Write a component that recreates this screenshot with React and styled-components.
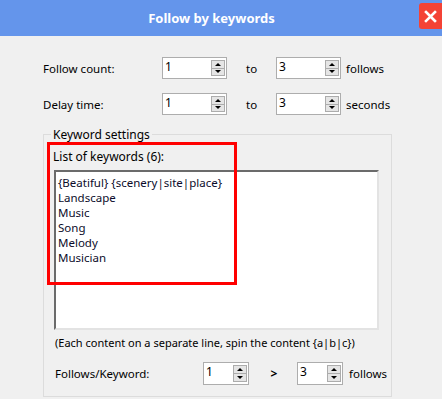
import React from 'react'
import styled, { createGlobalStyle } from 'styled-components'

const GlobalStyle = createGlobalStyle`
  html, body {
    margin: 0;
    padding: 0;
    background: #f0f0f0;
  }
  * {
    box-sizing: border-box;
  }
`;

const Window = styled.div`
  width: 442px;
  height: 399px;
  background: #f0f0f0;
  font-family: "Noto Sans", "Liberation Sans", sans-serif;
  font-size: 11.5px;
  color: #000;
  display: flex;
  flex-direction: column;
  overflow: hidden;
`;

const TitleBar = styled.div`
  height: 36px;
  flex: none;
  background: #6495eb;
  display: flex;
  align-items: flex-start;
`;

const Title = styled.div`
  flex: 1;
  text-align: center;
  color: #fff;
  font-weight: bold;
  font-size: 13px;
  line-height: 36px;
  padding-left: 4px;
`;

const CloseButton = styled.div`
  width: 23px;
  height: 26px;
  margin-top: 3px;
  background: #f44336;
  border-radius: 3px 0 0 3px;
  display: flex;
  align-items: center;
  justify-content: center;
`;

const Content = styled.div`
  padding: 21px 0 0 43px;
`;

const FormRow = styled.div`
  display: grid;
  grid-template-columns: ${({ $cols }) => $cols};
  align-items: center;
  height: ${({ $h }) => $h || 22}px;
  margin-bottom: ${({ $mb }) => $mb || 0}px;
`;

const Label = styled.span`
  white-space: nowrap;
  padding-left: ${({ $pl }) => $pl || 0}px;
`;

const SpinBox = styled.div`
  height: 100%;
  background: #fff;
  border: 1px solid #adadad;
  display: flex;
  align-items: stretch;
`;

const SpinValue = styled.div`
  flex: 1;
  padding-left: 2px;
  line-height: 18px;
  font-size: 12px;
`;

const SpinButtons = styled.div`
  width: 14px;
  margin: 2px 1px 2px 0;
  display: flex;
  flex-direction: column;
`;

const SpinButton = styled.div`
  flex: 1;
  background: #e5e5e5;
  border: 1px solid #acacac;
  display: flex;
  align-items: center;
  justify-content: center;
  & + & {
    border-top: none;
  }
`;

const Arrow = styled.span`
  width: 0;
  height: 0;
  border-left: 3px solid transparent;
  border-right: 3px solid transparent;
  ${({ $up }) => ($up ? 'border-bottom: 3px solid #000;' : 'border-top: 3px solid #000;')}
`;

const Group = styled.fieldset`
  margin: 12px 0 0 0;
  width: 349px;
  height: 270px;
  padding: 0;
  border: 1px solid #dcdcdc;
  min-width: 0;
`;

const Legend = styled.legend`
  margin-left: 7px;
  padding: 0 2px;
  line-height: 15px;
  font-size: 12px;
`;

const Inner = styled.div`
  position: relative;
  padding-top: 2px;
`;

const Highlight = styled.div`
  position: absolute;
  left: 3px;
  top: 0;
  width: 190px;
  height: 143px;
  border: 3px solid #ff0000;
  pointer-events: none;
`;

const ListLabel = styled.div`
  padding: 5px 0 0 9px;
  line-height: 15px;
  font-size: 12px;
`;

const KeywordArea = styled.textarea`
  display: block;
  margin: 6px 0 0 10px;
  width: 325px;
  height: 160px;
  resize: none;
  overflow: hidden;
  background: #fff;
  border-style: solid;
  border-width: 2px;
  border-color: #6b6b6b #e3e3e3 #e3e3e3 #6b6b6b;
  padding: 3px 2px;
  font-family: inherit;
  font-size: 11.5px;
  line-height: 15px;
  color: #0c0c2a;
  outline: none;
`;

const Hint = styled.div`
  padding: 5px 0 0 11px;
  line-height: 15px;
  font-size: 11px;
`;

const BottomRow = styled(FormRow)`
  margin: 12px 0 0 11px;
`;

const Gt = styled.span`
  font-weight: bold;
  font-size: 12px;
  text-align: center;
  padding-left: 2px;
`;

const Spin = ({ value }) => (
  <SpinBox>
    <SpinValue>{value}</SpinValue>
    <SpinButtons>
      <SpinButton><Arrow $up /></SpinButton>
      <SpinButton><Arrow /></SpinButton>
    </SpinButtons>
  </SpinBox>
);

const keywords = `{Beatiful} {scenery|site|place}
Landscape
Music
Song
Melody
Musician`;

const App = () => {
  return (
    <Window>
      <GlobalStyle />
      <TitleBar>
        <Title>Follow by keywords</Title>
        <CloseButton>
          <svg width="13" height="13" viewBox="0 0 13 13">
            <path d="M2 2 L11 11 M11 2 L2 11" stroke="#fff" strokeWidth="2.6" strokeLinecap="square" />
          </svg>
        </CloseButton>
      </TitleBar>
      <Content>
        <FormRow $cols="119px 65px 49px 65px auto" $mb={14}>
          <Label>Follow count:</Label>
          <Spin value="1" />
          <Label $pl={19}>to</Label>
          <Spin value="3" />
          <Label $pl={5}>follows</Label>
        </FormRow>
        <FormRow $cols="119px 65px 49px 65px auto">
          <Label>Delay time:</Label>
          <Spin value="1" />
          <Label $pl={19}>to</Label>
          <Spin value="3" />
          <Label $pl={5}>seconds</Label>
        </FormRow>
        <Group>
          <Legend>Keyword settings</Legend>
          <Inner>
            <Highlight />
            <ListLabel>List of keywords (6):</ListLabel>
            <KeywordArea readOnly value={keywords} />
            <Hint>(Each content on a separate line, spin the content {'{a|b|c}'})</Hint>
            <BottomRow $cols="148px 46px 48px 46px auto" $h={23}>
              <Label>Follows/Keyword:</Label>
              <Spin value="1" />
              <Gt>&gt;</Gt>
              <Spin value="3" />
              <Label $pl={6}>follows</Label>
            </BottomRow>
          </Inner>
        </Group>
      </Content>
    </Window>
  )
}

export default App
